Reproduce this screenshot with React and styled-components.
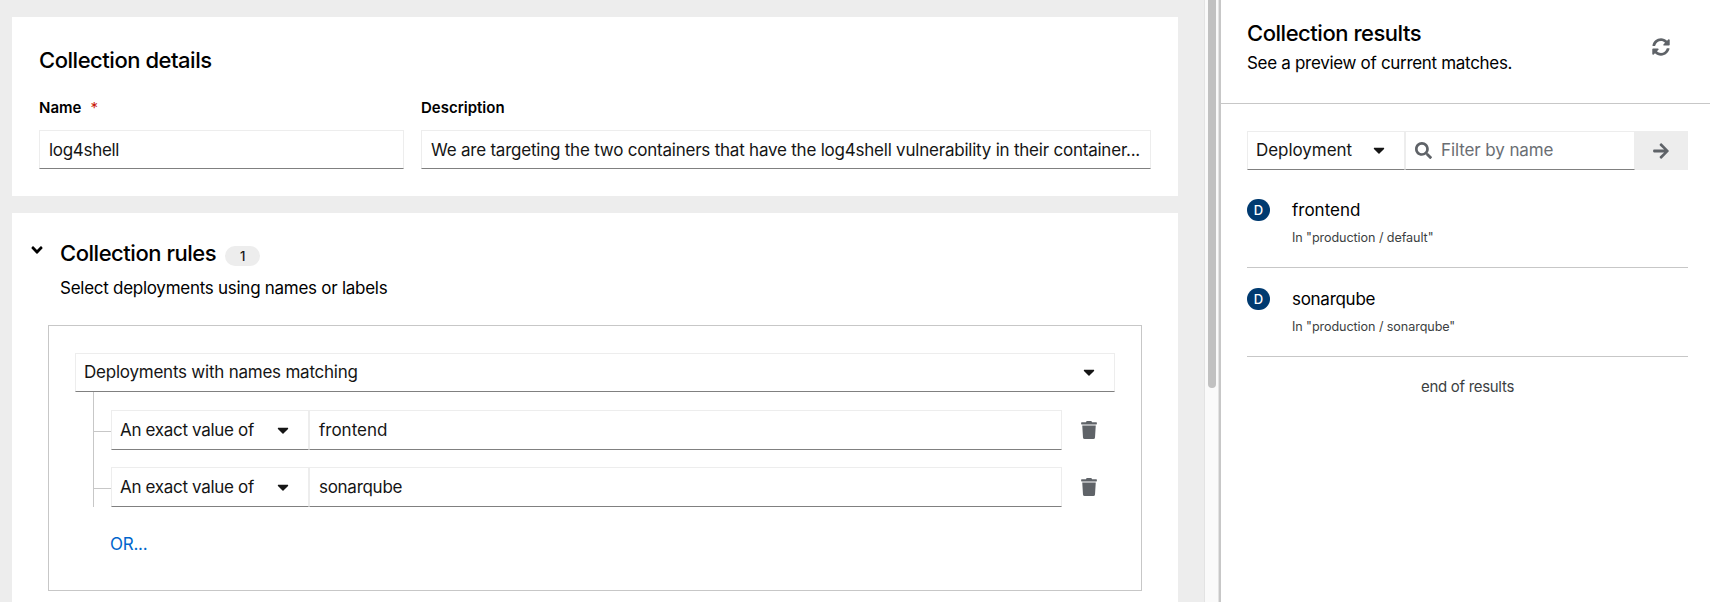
import React from 'react';
import styled, { createGlobalStyle } from 'styled-components';
import { FaSearch, FaArrowRight, FaCaretDown, FaSyncAlt, FaTrash, FaAngleDown } from 'react-icons/fa';

const GlobalStyle = createGlobalStyle`
  * { box-sizing: border-box; }
  html, body { margin: 0; height: 602px; overflow: hidden; }
  body { font-family: Inter, "Liberation Sans", sans-serif; font-size: 17px; color: #000; background: #fff; }
  h2, p { margin: 0; padding: 0; font-weight: 400; }
  svg { display: block; flex: none; }
`;

const Page = styled.div`display: flex; width: 1710px; height: 602px; overflow: hidden;`;
const Main = styled.main`
  display: flex; flex-direction: column; gap: 17px;
  width: 1204px; height: 602px; padding: 17px 26px 0 12px; background: #ededed; overflow: hidden;
`;
const Card = styled.section`flex: none; background: #fff; height: ${p => p.$height}px; padding: ${p => p.$padding};`;
const Text = styled.span`letter-spacing: ${p => p.$track || 0}px; white-space: nowrap;`;
const Title = styled.h2`
  font-size: 22px; line-height: 30px; font-weight: 500; white-space: nowrap; letter-spacing: -0.47px;
`;
const Fields = styled.div`display: flex; gap: 17px; margin-top: 21px;`;
const Field = styled.label`display: flex; flex-direction: column; gap: 10px; width: ${p => p.$width}px;`;
const Label = styled.span`display: flex; gap: 9px; font-size: 15px; line-height: 24px; height: 24px; font-weight: 600;`;
const Required = styled.span`color: #c9190b; font-weight: 400;`;
const Box = styled.div`
  display: flex; align-items: center; height: ${p => p.$height || 39}px; width: ${p => p.$width}px; flex: none;
  border: 1px solid #ededed; border-bottom-color: #808080; background: #fff; color: #151515;
  padding: ${p => (p.$low ? '1px' : '0')} ${p => (p.$select ? 16 : 11)}px ${p => (p.$low ? '0' : '1px')} ${p => (p.$select ? 8 : 9)}px;
  justify-content: ${p => (p.$select ? 'space-between' : 'flex-start')};
`;

const RulesHead = styled.div`display: flex; align-items: center; height: 30px;`;
const Toggle = styled.span`display: flex; width: 32px; margin: -6px 0 0 -4px;`;
const Badge = styled.span`
  margin: 5px 0 0 9px; width: 35px; height: 20px; border-radius: 10px; background: #ededed; color: #151515;
  font-size: 13px; line-height: 20px; font-weight: 500; text-align: center;
`;
const Subtitle = styled.p`
  margin: ${p => p.$margin}; line-height: 26px; white-space: nowrap; letter-spacing: ${p => p.$track || 0}px;
`;
const RuleBox = styled.div`
  margin: 24px 0 0 16px; width: 1094px; height: 266px; border: 1px solid #c7c7c7; padding: 27px 26px;
`;
const Tree = styled.div`
  margin-left: 18px; border-left: 1px solid #c7c7c7; height: 115px; padding-top: 18px;
  display: flex; flex-direction: column; gap: 17px;
`;
const Row = styled.div`display: flex; align-items: center; height: 40px;`;
const Branch = styled.span`width: 17px; height: 1px; background: #c7c7c7; margin-top: 3px;`;
const Trash = styled.span`color: #5f6368; margin-left: 18px;`;
const OrLink = styled.div`margin: 24px 0 0 35px; line-height: 26px; color: #0066cc; letter-spacing: -0.25px;`;

const ScrollTrack = styled.div`
  width: 15px; height: 602px; flex: none; background: #fafafa; border: solid #e3e3e3; border-width: 0 1px; padding-left: 3px;
`;
const Thumb = styled.div`width: 8px; height: 388px; background: #c1c1c1; border-radius: 0 0 4px 4px;`;
const Side = styled.aside`flex: 1; border-left: 2px solid #c7c7c7; background: #fff;`;
const SideHead = styled.header`
  display: flex; justify-content: space-between; align-items: flex-start; height: 104px;
  padding: 18px 40px 0 26px; border-bottom: 1px solid #c7c7c7;
`;
const Refresh = styled.span`color: #5f6368; margin-top: 20px;`;
const SideBody = styled.div`padding: 27px 22px 0 26px;`;
const Toolbar = styled.div`display: flex; height: 39px; color: #5f6368;`;
const Go = styled.div`
  flex: 1; background: #ededed; display: flex; align-items: center; justify-content: center; padding-right: 2px;
`;
const Placeholder = styled.span`color: #6a6e73; margin-left: 9px; letter-spacing: -0.1px;`;
const Item = styled.div`
  display: flex; align-items: flex-start; gap: 22px; height: ${p => p.$height}px; padding-top: ${p => p.$top}px;
  border-bottom: 1px solid #c7c7c7;
`;
const Circle = styled.span`
  width: 23px; height: 22px; border-radius: 11px; background: #003a70; color: #fff; font-size: 13px; font-weight: 500;
  line-height: 22px; text-align: center; margin-top: 2px;
`;
const ItemText = styled.div`display: flex; flex-direction: column; line-height: 26px;`;
const Location = styled.span`
  font-size: 12.6px; line-height: 20px; margin-top: 5px; color: #3c3f42; letter-spacing: -0.08px;
`;
const End = styled.p`
  margin-top: 18px; text-align: center; font-size: 15px; line-height: 24px; color: #3c3f42; letter-spacing: -0.3px;
`;

const rules = [{ name: 'frontend', track: 0 }, { name: 'sonarqube', track: -0.28 }];
const results = [
  { name: 'frontend', track: 0, location: 'In "production / default"', height: 98, top: 27 },
  { name: 'sonarqube', track: -0.28, location: 'In "production / sonarqube"', height: 89, top: 18 },
];

export default function App() {
  return (
    <Page>
      <GlobalStyle />
      <Main>
        <Card $height={179} $padding="28px 27px">
          <Title>Collection details</Title>
          <Fields>
            <Field $width={365}>
              <Label>Name <Required>*</Required></Label>
              <Box $low><Text $track={-0.3}>log4shell</Text></Box>
            </Field>
            <Field $width={730}>
              <Label>Description</Label>
              <Box $low>
                <Text $track={-0.22}>We are targeting the two containers that have the log4shell vulnerability in their container...</Text>
              </Box>
            </Field>
          </Fields>
        </Card>
        <Card $height={420} $padding="25px 20px">
          <RulesHead>
            <Toggle><FaAngleDown size={18} /></Toggle>
            <Title>Collection rules</Title>
            <Badge>1</Badge>
          </RulesHead>
          <Subtitle $margin="7px 0 0 28px" $track={-0.27}>Select deployments using names or labels</Subtitle>
          <RuleBox>
            <Box $width={1040} $select>
              <Text $track={-0.23}>Deployments with names matching</Text>
              <FaCaretDown size={18} />
            </Box>
            <Tree>
              {rules.map(r => (
                <Row key={r.name}>
                  <Branch />
                  <Box $width={198} $height={40} $select>
                    <Text $track={-0.32}>An exact value of</Text>
                    <FaCaretDown size={18} />
                  </Box>
                  <Box $width={753} $height={40}><Text $track={r.track}>{r.name}</Text></Box>
                  <Trash><FaTrash size={18} /></Trash>
                </Row>
              ))}
            </Tree>
            <OrLink>OR...</OrLink>
          </RuleBox>
        </Card>
      </Main>
      <ScrollTrack><Thumb /></ScrollTrack>
      <Side>
        <SideHead>
          <div>
            <Title>Collection results</Title>
            <Subtitle $margin="2px 0 0" $track={-0.31}>See a preview of current matches.</Subtitle>
          </div>
          <Refresh><FaSyncAlt size={18} /></Refresh>
        </SideHead>
        <SideBody>
          <Toolbar>
            <Box $width={158} $select><Text $track={-0.05}>Deployment</Text><FaCaretDown size={18} /></Box>
            <Box $width={230}><FaSearch size={17} color="#5f6368" /><Placeholder>Filter by name</Placeholder></Box>
            <Go><FaArrowRight size={18} /></Go>
          </Toolbar>
          {results.map(r => (
            <Item key={r.name} $height={r.height} $top={r.top}>
              <Circle>D</Circle>
              <ItemText>
                <Text $track={r.track}>{r.name}</Text>
                <Location>{r.location}</Location>
              </ItemText>
            </Item>
          ))}
          <End>end of results</End>
        </SideBody>
      </Side>
    </Page>
  );
}
